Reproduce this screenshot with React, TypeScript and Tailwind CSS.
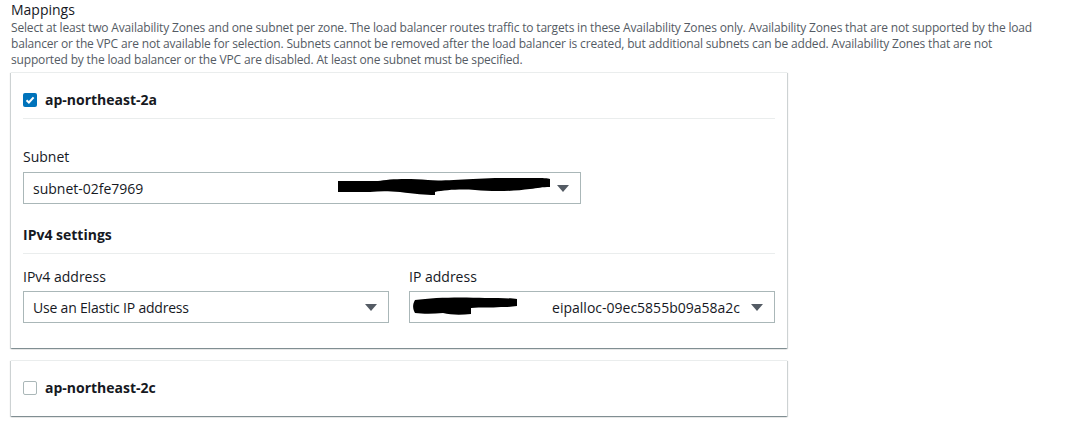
const font = { fontFamily: '"Open Sans", "Noto Sans", Arial, sans-serif' };

function Caret() {
  return (
    <svg width="14" height="9" viewBox="0 0 14 9" className="shrink-0">
      <path d="M1 1h12L7 8z" fill="#545b64" />
    </svg>
  );
}

function Checkbox({ checked }: { checked: boolean }) {
  if (checked) {
    return (
      <span className="flex h-[14px] w-[14px] items-center justify-center rounded-[2px] bg-[#0073bb]">
        <svg width="10" height="10" viewBox="0 0 10 10">
          <path d="M1.5 5.2l2.4 2.3L8.6 2.3" fill="none" stroke="#fff" strokeWidth="2" />
        </svg>
      </span>
    );
  }
  return <span className="h-[14px] w-[14px] rounded-[2px] border border-[#aab7b8] bg-white" />;
}

function Scribble({ width, d }: { width: number; d: string }) {
  return (
    <svg width={width} height="20" viewBox={`0 0 ${width} 20`} className="shrink-0">
      <path d={d} fill="#000" />
    </svg>
  );
}

function Select({ children }: { children: React.ReactNode }) {
  return (
    <div className="flex h-[32px] items-center border border-[#aab7b8] bg-white pl-[9px] pr-[6px] text-[14px] text-[#16191f]">
      <div className="flex min-w-0 flex-1 items-center">{children}</div>
      <div className="flex w-[22px] justify-center">
        <Caret />
      </div>
    </div>
  );
}

function Card({ children }: { children: React.ReactNode }) {
  return (
    <div className="w-[776px] border-t border-[#eaeded] bg-white px-[12px] shadow-[0_1px_1px_0_rgba(0,28,36,0.3),1px_1px_1px_0_rgba(0,28,36,0.15),-1px_1px_1px_0_rgba(0,28,36,0.15)]">
      {children}
    </div>
  );
}

export default function App() {
  return (
    <div className="min-h-[434px] w-[1067px] bg-white pl-[11px] pr-[32px]" style={font}>
      <h2 className="text-[14px] leading-[20px] text-[#16191f]">Mappings</h2>
      <p className="text-[12px] leading-[16px] tracking-[-0.17px] text-[#545b64]">
        Select at least two Availability Zones and one subnet per zone. The load balancer routes traffic to targets in
        these Availability Zones only. Availability Zones that are not supported by the load balancer or the VPC are not
        available for selection. Subnets cannot be removed after the load balancer is created, but additional subnets can
        be added. Availability Zones that are not supported by the load balancer or the VPC are disabled. At least one
        subnet must be specified.
      </p>

      <div className="mt-[4px]">
        <Card>
          <div className="flex items-center gap-[8px] border-b border-[#eaeded] pb-[7px] pt-[16px]">
            <Checkbox checked />
            <span className="text-[14px] font-bold leading-[22px] text-[#16191f]">ap-northeast-2a</span>
          </div>

          <div className="pt-[27px]">
            <div className="text-[14px] leading-[22px] text-[#16191f]">Subnet</div>
            <div className="mt-[4px] w-[558px]">
              <Select>
                <span>subnet-02fe7969</span>
                <span className="ml-auto mr-[2px]">
                  <Scribble
                    width={212}
                    d="M0 3h40c10-2 30-3 50-1c10 1 25 0 45-1c20-1 40-2 60-1c10 0 15 0 17 1v8c-8 0-12 1-20 2c-15 2-35 3-55 1c-15-1-30 0-40 2v3c-10 0-20-1-35-3c-12-1-20-1-30 0H0z"
                  />
                </span>
              </Select>
            </div>
          </div>

          <div className="mt-[18px] border-b border-[#eaeded] pb-[7px]">
            <span className="text-[14px] font-bold leading-[22px] text-[#16191f]">IPv4 settings</span>
          </div>

          <div className="grid grid-cols-2 gap-[20px] pb-[25px] pt-[12px]">
            <div>
              <div className="text-[14px] leading-[22px] text-[#16191f]">IPv4 address</div>
              <div className="mt-[3px]">
                <Select>
                  <span className="tracking-[-0.2px]">Use an Elastic IP address</span>
                </Select>
              </div>
            </div>
            <div>
              <div className="text-[14px] leading-[22px] text-[#16191f]">IP address</div>
              <div className="mt-[3px]">
                <Select>
                  <span className="-ml-[6px]">
                    <Scribble
                      width={104}
                      d="M2 3c20-3 50-3 70-2c12 0 25 0 32 1v7c-6 1-12 1-16 1c-10 1-20 0-30 1v6c-10 1-20 1-28-1c-10 1-20 1-28 0c-2-3-3-8 0-13z"
                    />
                  </span>
                  <span className="ml-auto mr-[6px]">eipalloc-09ec5855b09a58a2c</span>
                </Select>
              </div>
            </div>
          </div>
        </Card>

        <div className="mt-[12px]">
          <Card>
            <div className="flex items-center gap-[8px] pb-[17px] pt-[16px]">
              <Checkbox checked={false} />
              <span className="text-[14px] font-bold leading-[22px] text-[#16191f]">ap-northeast-2c</span>
            </div>
          </Card>
        </div>
      </div>
    </div>
  );
}
